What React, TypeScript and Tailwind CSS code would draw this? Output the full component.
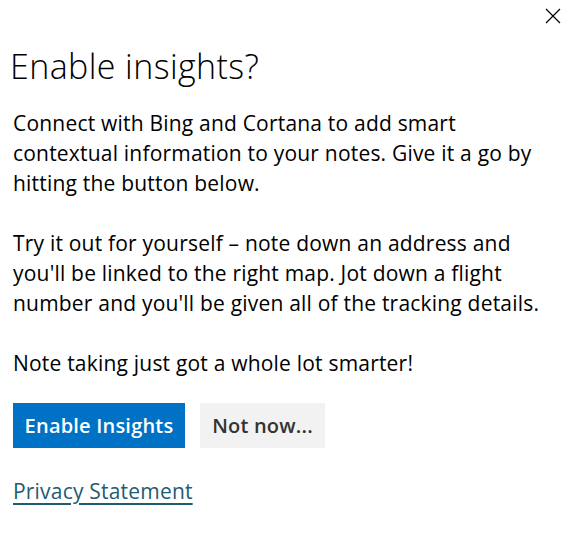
export default function App() {
  return (
    <div
      className="relative w-[564px] h-[559px] bg-white text-black"
      style={{ fontFamily: '"Open Sans", "Noto Sans", sans-serif' }}
    >
      <button className="absolute top-[8px] right-[3px] w-[16px] h-[16px]" aria-label="Close">
        <svg viewBox="0 0 16 16" width="16" height="16" stroke="#000" strokeWidth="1.2" fill="none">
          <path d="M1 1 L15 15 M15 1 L1 15" />
        </svg>
      </button>
      <div className="pt-[46px] pl-[10px] pr-2">
        <h1 className="text-[34px] font-light leading-[40px] tracking-[0.4px]">Enable insights?</h1>
        <div className="pl-[3px] mt-[22px] text-[21px] leading-[30px] tracking-[0.2px]">
          <p>
            Connect with Bing and Cortana to add smart
            <br />
            contextual information to your notes. Give it a go by
            <br />
            hitting the button below.
          </p>
          <p className="mt-[30px]">
            Try it out for yourself – note down an address and
            <br />
            you'll be linked to the right map. Jot down a flight
            <br />
            number and you'll be given all of the tracking details.
          </p>
          <p className="mt-[30px]">Note taking just got a whole lot smarter!</p>
          <div className="flex gap-[15px] mt-[25px]">
            <button className="h-[45px] w-[172px] bg-[#0072c6] text-white font-semibold text-[20px]">
              Enable Insights
            </button>
            <button className="h-[45px] w-[125px] bg-[#f2f2f2] text-[#333] font-semibold text-[20px]">
              Not now...
            </button>
          </div>
          <a href="#" className="inline-block mt-[28px] text-[#1f5b73] underline underline-offset-[4px]">
            Privacy Statement
          </a>
        </div>
      </div>
    </div>
  )
}
